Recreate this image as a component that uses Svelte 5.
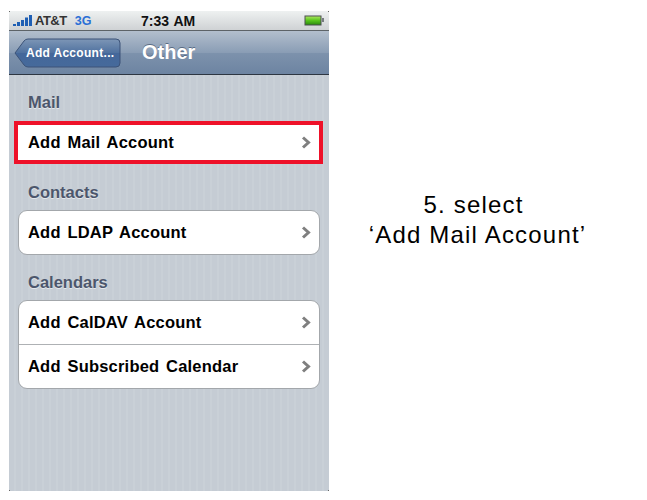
<script>
	const groups = [
		{ title: 'Mail', rows: ['Add Mail Account'], marked: true },
		{ title: 'Contacts', rows: ['Add LDAP Account'] },
		{ title: 'Calendars', rows: ['Add CalDAV Account', 'Add Subscribed Calendar'] }
	];
</script>

<main class="page">
	<div class="phone">
		<div class="status">
			<div class="carrier">
				<svg class="signal" width="20" height="13" viewBox="0 0 20 13">
					<rect x="0" y="9" width="3" height="2" />
					<rect x="4" y="7" width="3" height="4" />
					<rect x="8" y="5" width="3" height="6" />
					<rect x="12" y="2.5" width="3" height="8.5" />
					<rect x="16" y="0" width="3" height="11" />
				</svg>
				<span class="att">AT&amp;T</span>
				<span class="net">3G</span>
			</div>
			<span class="time">7:33 AM</span>
			<svg class="battery" width="21" height="11" viewBox="0 0 21 11">
				<defs>
					<linearGradient id="charge" x1="0" y1="0" x2="0" y2="1">
						<stop offset="0" stop-color="#a6e45a" />
						<stop offset="0.5" stop-color="#57c41c" />
						<stop offset="1" stop-color="#2f8f10" />
					</linearGradient>
				</defs>
				<rect x="0.5" y="0.5" width="17" height="10" fill="#4b4f50" />
				<rect x="1.5" y="1.5" width="15" height="8" fill="url(#charge)" />
				<rect x="18" y="3" width="2" height="4" fill="#777c80" />
			</svg>
		</div>

		<header class="nav">
			<div class="back">
				<svg class="back-shape" width="108" height="30" viewBox="0 0 108 30">
					<defs>
						<linearGradient id="backfill" x1="0" y1="0" x2="0" y2="1">
							<stop offset="0" stop-color="#7d96b6" />
							<stop offset="0.5" stop-color="#4f719f" />
							<stop offset="0.51" stop-color="#44679a" />
							<stop offset="1" stop-color="#466a9b" />
						</linearGradient>
					</defs>
					<path
						d="M1 15 L10 3 Q11.500 1 14 1 H102 Q106 1 106 5 V25 Q106 29 102 29 H14 Q11.500 29 10 27 Z"
						fill="url(#backfill)"
						stroke="#3c5378"
					/>
				</svg>
				<span class="back-label">Add Account...</span>
			</div>
			<h1>Other</h1>
		</header>

		<div class="content">
			{#each groups as group}
				<section>
					<h2>{group.title}</h2>
					<ul class:marked={group.marked}>
						{#each group.rows as row}
							<li>
								<span>{row}</span>
								<svg width="10" height="13" viewBox="0 0 10 13">
									<path d="M2 1.500 L7.500 6.500 L2 11.500" fill="none" stroke="#7f7f7f" stroke-width="3" />
								</svg>
							</li>
						{/each}
					</ul>
				</section>
			{/each}
		</div>
	</div>

	<p class="note">5. select&nbsp;<br />‘Add Mail Account’</p>
</main>

<style>
	:global(body) {
		margin: 0;
		background: #fff;
	}
	.page {
		width: 647px;
		height: 500px;
		display: flex;
		align-items: flex-start;
		padding: 11px 0 0 9px;
		box-sizing: border-box;
		font-family: "Liberation Sans", Arial, sans-serif;
		overflow: hidden;
	}
	.phone {
		width: 320px;
		height: 480px;
		flex: none;
		display: flex;
		flex-direction: column;
		position: relative;
		background: repeating-linear-gradient(90deg, #c5ccd4 0, #c5ccd4 5px, #c9d0d7 5px, #c9d0d7 7px);
	}
	/* the small dark specks on the screen corners */
	.phone::after {
		content: "";
		position: absolute;
		inset: 0;
		pointer-events: none;
		background:
			linear-gradient(#666, #666) 0 0 / 1px 1px no-repeat,
			linear-gradient(#666, #666) 100% 0 / 1px 1px no-repeat,
			linear-gradient(#666, #666) 0 100% / 1px 1px no-repeat,
			linear-gradient(#666, #666) 100% 100% / 1px 1px no-repeat;
	}
	.status {
		height: 19px;
		flex: none;
		display: flex;
		align-items: center;
		justify-content: space-between;
		position: relative;
		padding: 0 4px 0 4px;
		background: linear-gradient(#eef1f1, #cfd2d4);
		border-bottom: 1px solid #5d6367;
	}
	.carrier {
		display: flex;
		align-items: center;
	}
	.signal {
		fill: #1f5fb4;
		margin-right: 2px;
		margin-top: 2px;
	}
	.att {
		font-size: 13px;
		font-weight: bold;
		letter-spacing: -0.5px;
		color: #333;
	}
	.net {
		font-size: 12.5px;
		font-weight: bold;
		color: #2a6fd6;
		margin-left: 8px;
	}
	.time {
		position: absolute;
		left: 132px;
		top: 2px;
		font-size: 14px;
		font-weight: bold;
		word-spacing: 1px;
		color: #111;
	}
	.nav {
		height: 43px;
		flex: none;
		display: flex;
		align-items: center;
		background: linear-gradient(#b3bfcd 0, #8a9db5 50%, #7d92ac 51%, #6d84a2 100%);
		border-bottom: 1px solid #2d3642;
	}
	.back {
		position: relative;
		width: 108px;
		height: 30px;
		margin-left: 5px;
		flex: none;
	}
	.back-shape {
		display: block;
	}
	.back-label {
		position: absolute;
		left: 12px;
		top: 8px;
		font-size: 12px;
		font-weight: bold;
		letter-spacing: 0.3px;
		color: #fff;
	}
	h1 {
		margin: 0 0 0 20px;
		font-size: 20px;
		font-weight: bold;
		color: #fff;
		text-shadow: 0 -1px 0 #5a6c84;
	}
	.content {
		flex: 1;
		display: flex;
		flex-direction: column;
		gap: 18.5px;
		padding: 18px 9px 0;
	}
	h2 {
		margin: 0 0 9px 10px;
		font-size: 16.5px;
		line-height: 18px;
		font-weight: bold;
		color: #4c566c;
		text-shadow: 0 1px 0 #e4e8ec;
	}
	ul {
		margin: 0;
		padding: 0;
		list-style: none;
		background: #fff;
		border: 1px solid #a3a7ab;
		border-radius: 9px;
	}
	ul.marked {
		border-radius: 0;
		border: 4px solid #ee1129;
		margin: 10px -3px 0.5px -4px;
	}
	li {
		height: 42.5px;
		display: flex;
		align-items: center;
		justify-content: space-between;
		padding: 0 8px 0 9px;
		font-size: 16.5px;
		font-weight: bold;
		word-spacing: 2px;
		letter-spacing: 0.2px;
		color: #000;
	}
	li + li {
		height: 43px;
		border-top: 1px solid #aeb1b4;
	}
	.marked li {
		height: 35px;
		padding: 0 8px 0 10px;
	}
	.note {
		width: 297px;
		margin: 179px 0 0 0;
		text-align: center;
		font-size: 24px;
		line-height: 30px;
		letter-spacing: 1.2px;
		color: #000;
	}
</style>
